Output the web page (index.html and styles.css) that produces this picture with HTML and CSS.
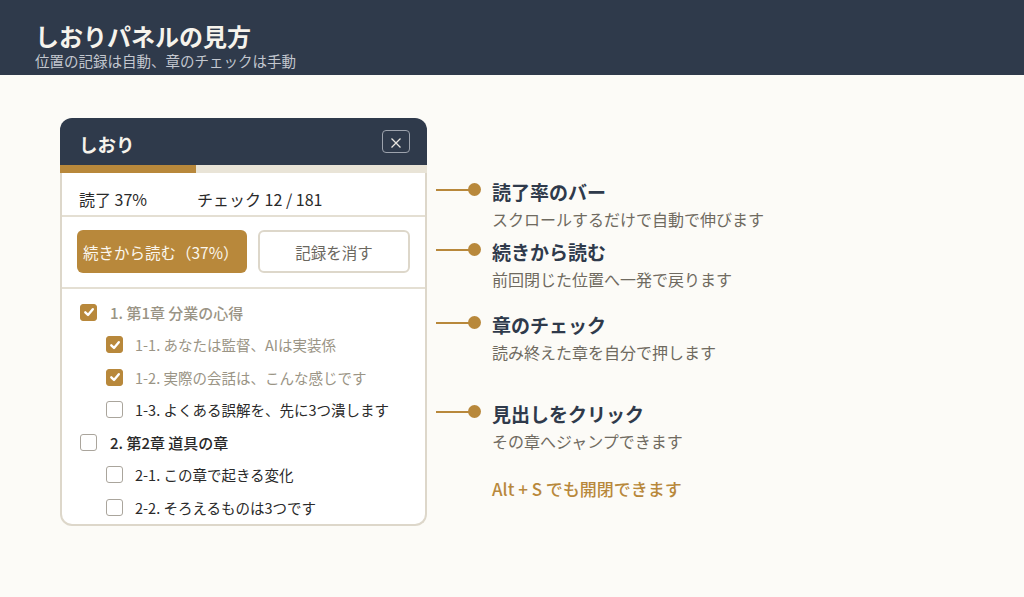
FILE: index.html
```html
<!DOCTYPE html>
<html lang="ja">
<head>
<meta charset="utf-8">
<title>しおりパネルの見方</title>
<link rel="stylesheet" href="styles.css">
</head>
<body>
<header class="topbar">
  <h1 class="topbar-title">しおりパネルの見方</h1>
  <p class="topbar-sub">位置の記録は自動、章のチェックは手動</p>
</header>
<main class="stage">
  <section class="panel">
    <div class="panel-head">
      <span class="panel-title">しおり</span>
      <button class="close-btn" aria-label="閉じる">
        <svg width="12" height="12" viewBox="0 0 12 12"><path d="M1.5 1.5 L10.5 10.5 M10.5 1.5 L1.5 10.5" stroke="#e8e6e0" stroke-width="1.3" fill="none"/></svg>
      </button>
    </div>
    <div class="progress"><div class="progress-fill" style="width:37%"></div></div>
    <div class="panel-body">
      <div class="stats">
        <span class="stat stat-read">読了 37%</span>
        <span class="stat">チェック 12 / 181</span>
      </div>
      <div class="actions">
        <button class="btn btn-primary">続きから読む（37%）</button>
        <button class="btn btn-ghost">記録を消す</button>
      </div>
      <ul class="toc">
        <li class="toc-row chapter done"><span class="cb on"><svg width="12" height="12" viewBox="0 0 12 12"><path d="M2.3 6.3 L5 8.9 L9.8 3.2" stroke="#fff" stroke-width="2.4" fill="none" stroke-linecap="round" stroke-linejoin="round"/></svg></span>1. 第1章 分業の心得</li>
        <li class="toc-row sub done"><span class="cb on"><svg width="12" height="12" viewBox="0 0 12 12"><path d="M2.3 6.3 L5 8.9 L9.8 3.2" stroke="#fff" stroke-width="2.4" fill="none" stroke-linecap="round" stroke-linejoin="round"/></svg></span>1-1. あなたは監督、AIは実装係</li>
        <li class="toc-row sub done"><span class="cb on"><svg width="12" height="12" viewBox="0 0 12 12"><path d="M2.3 6.3 L5 8.9 L9.8 3.2" stroke="#fff" stroke-width="2.4" fill="none" stroke-linecap="round" stroke-linejoin="round"/></svg></span>1-2. 実際の会話は、こんな感じです</li>
        <li class="toc-row sub"><span class="cb"></span>1-3. よくある誤解を、先に3つ潰します</li>
        <li class="toc-row chapter"><span class="cb"></span>2. 第2章 道具の章</li>
        <li class="toc-row sub"><span class="cb"></span>2-1. この章で起きる変化</li>
        <li class="toc-row sub"><span class="cb"></span>2-2. そろえるものは3つです</li>
      </ul>
    </div>
  </section>
  <aside class="notes">
    <div class="note note-1">
      <span class="pin"></span>
      <div class="note-text">
        <h2 class="note-title">読了率のバー</h2>
        <p class="note-desc">スクロールするだけで自動で伸びます</p>
      </div>
    </div>
    <div class="note note-2">
      <span class="pin"></span>
      <div class="note-text">
        <h2 class="note-title">続きから読む</h2>
        <p class="note-desc">前回閉じた位置へ一発で戻ります</p>
      </div>
    </div>
    <div class="note note-3">
      <span class="pin"></span>
      <div class="note-text">
        <h2 class="note-title">章のチェック</h2>
        <p class="note-desc">読み終えた章を自分で押します</p>
      </div>
    </div>
    <div class="note note-4">
      <span class="pin"></span>
      <div class="note-text">
        <h2 class="note-title">見出しをクリック</h2>
        <p class="note-desc">その章へジャンプできます</p>
      </div>
    </div>
    <p class="shortcut">Alt + S でも開閉できます</p>
  </aside>
</main>
</body>
</html>
```

FILE: styles.css
```css
* { box-sizing: border-box; }
html, body { margin: 0; padding: 0; }
body {
  width: 1024px;
  height: 597px;
  overflow: hidden;
  background: #fcfbf7;
  font-family: "Noto Sans CJK JP", "Noto Sans", sans-serif;
  color: #2a2a2a;
}
.topbar {
  height: 75px;
  background: #2f3a4b;
  padding: 23px 0 0 35px;
}
.topbar-title {
  margin: 0;
  font-size: 24px;
  line-height: 26px;
  font-weight: 700;
  color: #f6f3ec;
}
.topbar-sub {
  margin: 3px 0 0;
  font-size: 14.5px;
  line-height: 18px;
  color: #c3c7cf;
}
.stage {
  display: flex;
  padding: 43px 0 0 60px;
}
.panel {
  width: 367px;
  flex: none;
}
.panel-head {
  height: 47px;
  background: #2f3a4b;
  border-radius: 12px 12px 0 0;
  display: flex;
  align-items: center;
  justify-content: space-between;
  padding: 0 17px 0 19px;
}
.panel-title {
  font-size: 18.5px;
  font-weight: 700;
  color: #f6f3ec;
  line-height: 24px;
  margin-top: 4px;
}
.close-btn {
  width: 28px;
  height: 23px;
  border: 1.5px solid #9da3ad;
  border-radius: 4px;
  background: transparent;
  padding: 0;
  display: flex;
  align-items: center;
  justify-content: center;
  margin-top: -1px;
}
.close-btn svg { margin-top: 3px; }
.progress {
  height: 8px;
  background: #e9e4d7;
}
.progress-fill {
  height: 100%;
  background: #b8883b;
}
.panel-body {
  background: #fff;
  border: 2px solid #ddd7ca;
  border-top: none;
  border-radius: 0 0 12px 12px;
}
.stats {
  height: 44px;
  display: flex;
  align-items: center;
  padding: 9px 0 0 17px;
  border-bottom: 2px solid #e4dfd3;
  font-size: 16px;
}
.stat-read { width: 118px; }
.actions {
  display: flex;
  gap: 11px;
  padding: 13px 15px 14px;
  border-bottom: 2px solid #e4dfd3;
}
.btn {
  height: 43px;
  border-radius: 6px;
  font-family: inherit;
  font-size: 15.5px;
  padding: 0;
}
.btn-primary {
  width: 170px;
  background: #b8883b;
  color: #fbf7ee;
  border: none;
  text-align: left;
  padding-left: 6px;
}
.btn-ghost {
  flex: 1;
  background: #fff;
  color: #6b675f;
  border: 2px solid #ddd7ca;
}
.toc {
  list-style: none;
  margin: 0;
  padding: 7px 0 0;
}
.toc-row {
  height: 32.5px;
  display: flex;
  align-items: center;
  font-size: 14.5px;
  color: #2a2a2a;
}
.toc-row.chapter { padding-left: 18px; font-weight: 500; font-size: 15px; }
.toc-row.sub { padding-left: 44px; }
.toc-row.done { color: #9a9485; }
.cb {
  width: 17px;
  height: 17px;
  flex: none;
  border: 1.5px solid #aaa59c;
  border-radius: 3px;
  background: #fff;
  margin-right: 12px;
  display: flex;
  align-items: center;
  justify-content: center;
}
.toc-row.chapter .cb { margin-right: 13px; }
.cb.on {
  background: #b8883b;
  border-color: #b8883b;
}
.notes {
  padding: 60px 0 0 9px;
}
.note {
  display: flex;
  align-items: flex-start;
}
.pin {
  position: relative;
  width: 45px;
  height: 13px;
  margin-top: 5px;
  flex: none;
  margin-right: 11px;
}
.pin::before {
  content: "";
  position: absolute;
  left: 0;
  top: 5.5px;
  width: 34px;
  height: 2px;
  background: #b8883b;
}
.pin::after {
  content: "";
  position: absolute;
  right: 0;
  top: 0;
  width: 13px;
  height: 13px;
  border-radius: 50%;
  background: #b8883b;
}
.note-title {
  margin: 0;
  font-size: 19px;
  line-height: 28px;
  font-weight: 700;
  color: #2f3a4b;
}
.note-desc {
  margin: 0;
  font-size: 16px;
  line-height: 26px;
  color: #6f6a60;
}
.note-2 { margin-top: 6px; }
.note-3 { margin-top: 19px; }
.note-4 { margin-top: 35px; }
.shortcut {
  margin: 22px 0 0 56px;
  font-size: 17px;
  line-height: 26px;
  font-weight: 500;
  color: #b8883b;
}
```
